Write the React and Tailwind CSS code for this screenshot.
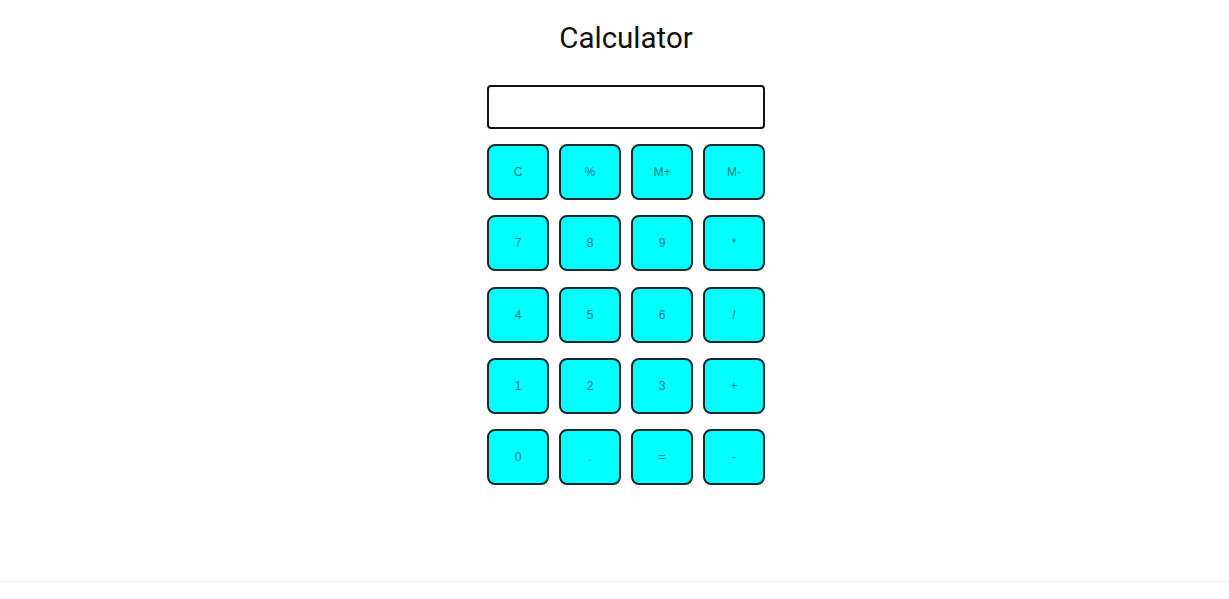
const KEYS = [
  'C', '%', 'M+', 'M-',
  '7', '8', '9', '*',
  '4', '5', '6', '/',
  '1', '2', '3', '+',
  '0', '.', '=', '-',
];

export default function App() {
  return (
    <div className="min-h-[599px] bg-white flex flex-col">
      <main className="flex-1 h-[581px] pl-[23px] flex flex-col items-center">
        <h1 className="mt-[19px] text-[29.5px] leading-[38px] text-[#111] font-['Roboto',sans-serif]">Calculator</h1>
        <input
          readOnly
          className="mt-[28px] w-[278px] h-[44px] border-2 border-[#111] rounded-[4px] bg-white outline-none"
        />
        <div className="mt-[15px] grid grid-cols-[repeat(4,62px)] gap-x-[10px] gap-y-[15.25px]">
          {KEYS.map((k) => (
            <button
              key={k}
              className="h-[56px] bg-[#00ffff] border-2 border-[#1a2a2a] rounded-[8px] text-[12px] text-[#157a7a] font-['Liberation_Sans',Arial,sans-serif]"
            >
              {k}
            </button>
          ))}
        </div>
      </main>
      <footer className="h-[18px] border-t border-[#eeeeee]"></footer>
    </div>
  );
}
